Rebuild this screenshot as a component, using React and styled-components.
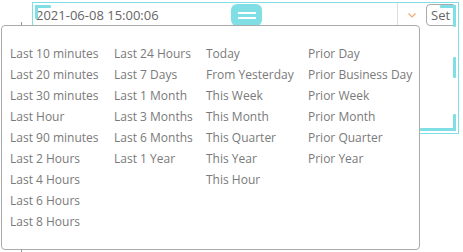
import React from "react";
import styled, { createGlobalStyle, css } from "styled-components";

const Global = createGlobalStyle`
  html, body { margin: 0; padding: 0; background: #fff; }
  body { font-family: "Open Sans", "Noto Sans", sans-serif; width: 463px; height: 252px; overflow: hidden; }
`;

const CYAN = "#80dfe5";

const Page = styled.div`
  position: relative;
  width: 463px;
  height: 252px;
  padding: 2px 0 0 32px;
  box-sizing: border-box;
`;

const Guide = styled.div`
  position: absolute;
  left: 21px;
  top: 22px;
  width: 1px;
  height: 230px;
  background: #999;
`;

const Frame = styled.div`
  position: relative;
  width: 427px;
  height: 132px;
  box-sizing: border-box;
  border: 1px solid ${CYAN};
`;

const Combo = styled.div`
  display: flex;
  align-items: stretch;
  height: 24px;
`;

const InputText = styled.div`
  flex: 1;
  display: flex;
  align-items: center;
  padding-left: 3px;
  font-size: 13px;
  color: #666;
  border-right: 1px solid #ddd;
`;

const Chevron = styled.div`
  width: 28px;
  display: flex;
  align-items: center;
  justify-content: center;
`;

const SetButton = styled.button`
  box-sizing: border-box;
  flex: 0 0 30px;
  margin: 1px 2px 0 0;
  height: 22px;
  padding: 0 0 0 4px;
  border: 1px solid #aaa;
  border-radius: 4px;
  background: #fff;
  font-family: inherit;
  font-size: 13px;
  color: #666;
  text-align: left;
`;

const cornerPos = {
  tl: css`left: 2px; top: 2px; width: 16px; height: 14px;
    &::before { left: 0; top: 0; width: 16px; height: 3px; }
    &::after { left: 0; top: 0; width: 3px; height: 14px; }`,
  tr: css`right: 2px; top: 2px; width: 16px; height: 22px;
    &::before { right: 0; top: 0; width: 16px; height: 3px; }
    &::after { right: 0; top: 0; width: 3px; height: 22px; }`,
  br: css`right: 2px; bottom: 2px; width: 36px; height: 17px;
    &::before { right: 0; bottom: 0; width: 36px; height: 3px; }
    &::after { right: 0; bottom: 0; width: 3px; height: 17px; }`,
};

const Corner = styled.div`
  position: absolute;
  pointer-events: none;
  &::before, &::after {
    content: "";
    position: absolute;
    background: ${CYAN};
    border-radius: 1px;
  }
  ${(p) => cornerPos[p.$at]}
`;

const SideHandle = styled.div`
  position: absolute;
  right: 2px;
  top: 54px;
  width: 3px;
  height: 21px;
  background: ${CYAN};
  border-radius: 1px;
`;

const MidHandle = styled.div`
  position: absolute;
  left: 198px;
  top: 1px;
  width: 31px;
  height: 22px;
  background: ${CYAN};
  border-radius: 6px;
  display: flex;
  flex-direction: column;
  justify-content: center;
  align-items: center;
  gap: 3px;
  & > span {
    display: block;
    width: 18px;
    height: 2px;
    background: #fff;
  }
`;

const Panel = styled.div`
  position: absolute;
  left: 1px;
  top: 25px;
  width: 419px;
  height: 225px;
  box-sizing: border-box;
  border: 1px solid #aaa;
  border-radius: 4px;
  background: #fff;
  padding: 17px 0 0 8px;
  display: flex;
  align-items: flex-start;
`;

const Column = styled.ul`
  list-style: none;
  margin: 0;
  padding: 0;
  width: ${(p) => p.$w}px;
`;

const Item = styled.li`
  font-size: 12px;
  line-height: 21px;
  color: #7a7a7a;
  white-space: nowrap;
`;

const cols = [
  { w: 104, items: ["Last 10 minutes", "Last 20 minutes", "Last 30 minutes", "Last Hour", "Last 90 minutes", "Last 2 Hours", "Last 4 Hours", "Last 6 Hours", "Last 8 Hours"] },
  { w: 92, items: ["Last 24 Hours", "Last 7 Days", "Last 1 Month", "Last 3 Months", "Last 6 Months", "Last 1 Year"] },
  { w: 102, items: ["Today", "From Yesterday", "This Week", "This Month", "This Quarter", "This Year", "This Hour"] },
  { w: 110, items: ["Prior Day", "Prior Business Day", "Prior Week", "Prior Month", "Prior Quarter", "Prior Year"] },
];

export default function App() {
  return (
    <>
      <Global />
      <Page>
        <Guide />
        <Frame>
          <Combo>
            <InputText>2021-06-08 15:00:06</InputText>
            <Chevron>
              <svg width="8" height="5" viewBox="0 0 8 5">
                <path d="M0.5 0.5 L4 4 L7.5 0.5" fill="none" stroke="#f5a66a" strokeWidth="1.2" />
              </svg>
            </Chevron>
            <SetButton>Set</SetButton>
          </Combo>
          <Corner $at="tl" />
          <MidHandle><span /><span /></MidHandle>
          <Corner $at="tr" />
          <SideHandle />
          <Corner $at="br" />
        </Frame>
        <Panel>
          {cols.map((c, i) => (
            <Column key={i} $w={c.w}>
              {c.items.map((t) => <Item key={t}>{t}</Item>)}
            </Column>
          ))}
        </Panel>
      </Page>
    </>
  );
}
